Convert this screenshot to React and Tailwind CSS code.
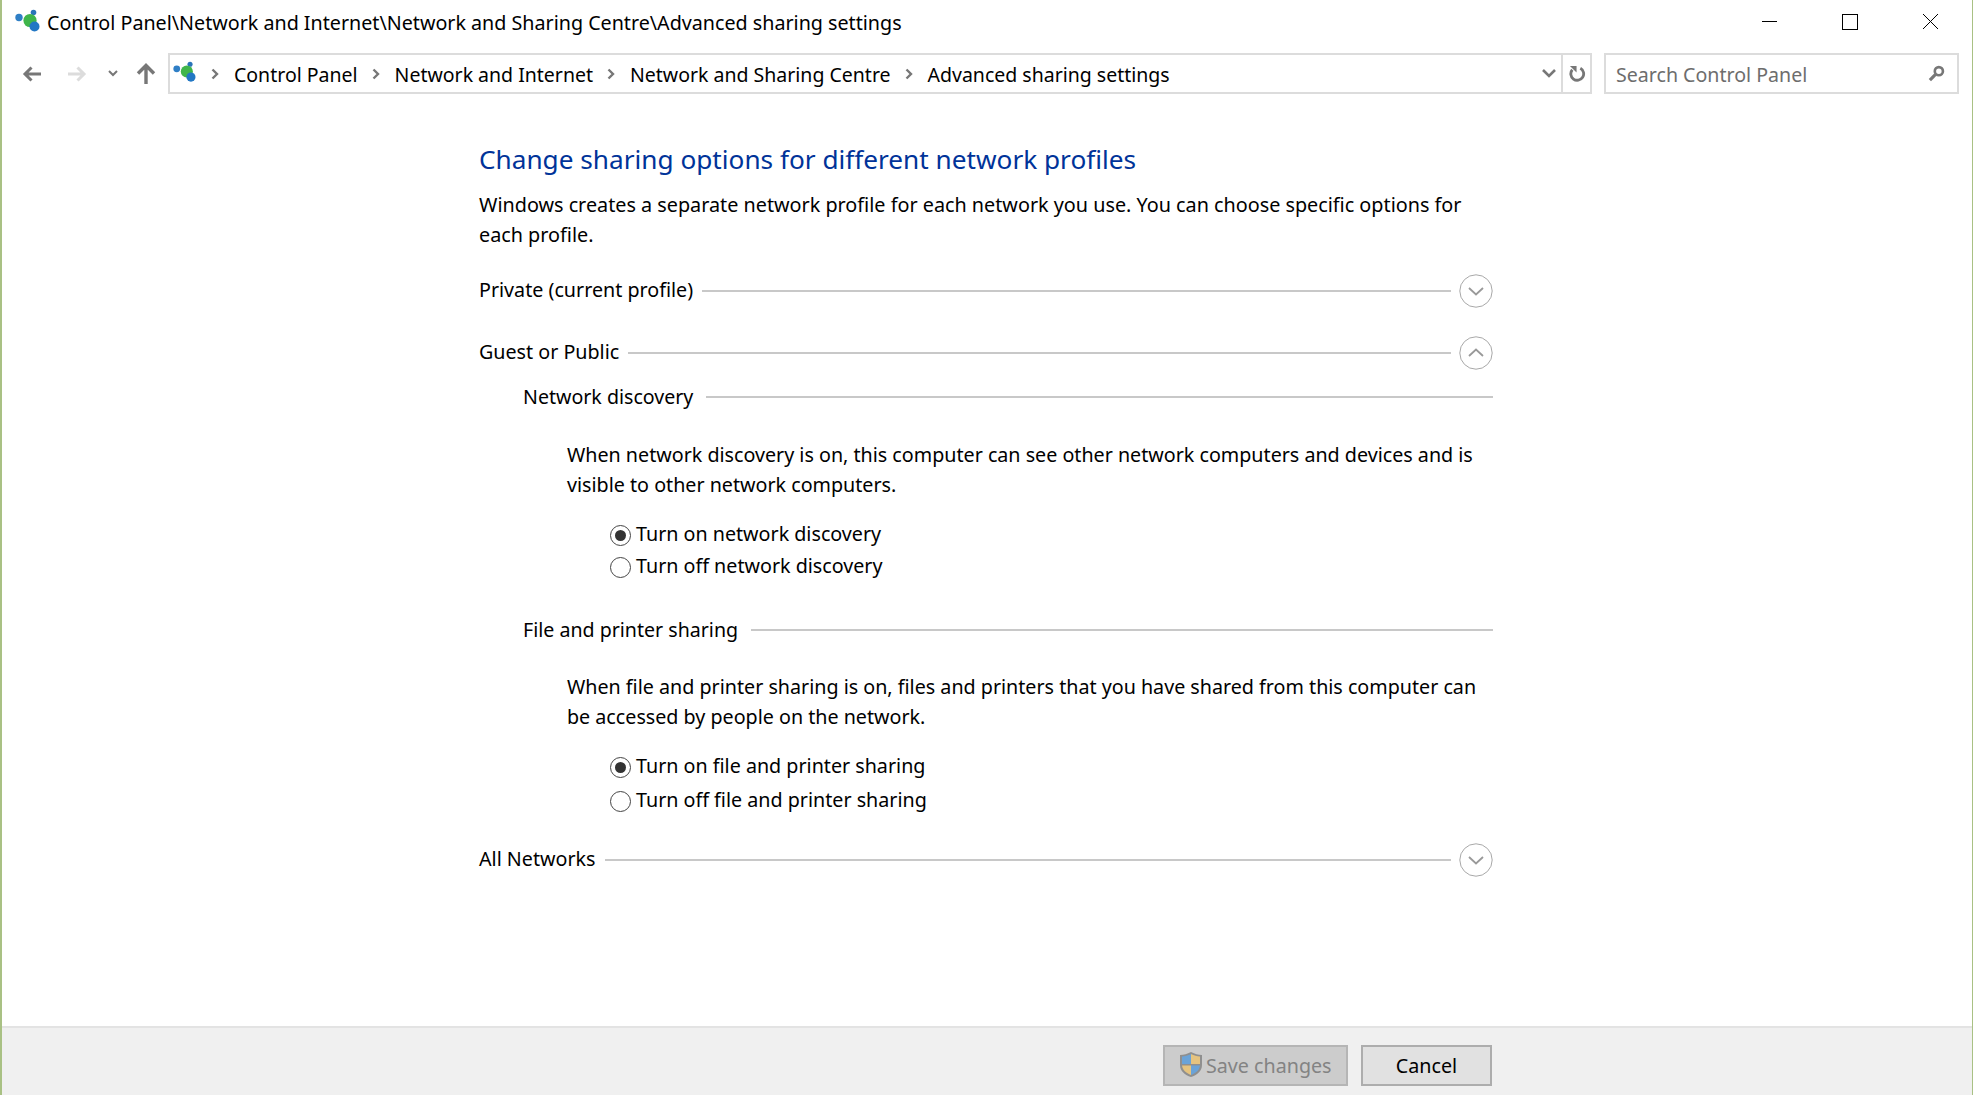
const NetworkIcon = ({ className }) => (
  <svg viewBox="0 0 26 24" className={className}>
    <circle cx="4" cy="8.5" r="3.7" fill="#2f7fc6" />
    <circle cx="18.5" cy="3.5" r="2.8" fill="#2a74b8" />
    <circle cx="15" cy="11.5" r="6.6" fill="#3fb54a" />
    <circle cx="19.5" cy="17.5" r="5" fill="#2277c4" />
  </svg>
);

const Chevron = ({ up }) => (
  <svg viewBox="0 0 34 34" className="w-[34px] h-[34px] shrink-0 mt-[1px]">
    <circle cx="17" cy="17" r="16.2" fill="none" stroke="#a8a8a8" strokeWidth="1" />
    <path d={up ? "M10 20 L17 13.5 L24 20" : "M10 14 L17 20.5 L24 14"} fill="none" stroke="#999" strokeWidth="1.8" />
  </svg>
);

const SectionRow = ({ label, up, className }) => (
  <div className={"flex items-center h-[34px] " + className}>
    <span className="text-[19.7px] text-black whitespace-nowrap">{label}</span>
    <div className="flex-1 h-[2px] bg-[#c8c8c8] ml-[9px] mr-[8px] mt-[1px]"></div>
    <Chevron up={up} />
  </div>
);

const SubRow = ({ label, className }) => (
  <div className={"flex items-center h-[30px] ml-[44px] " + className}>
    <span className="text-[19.6px] text-black whitespace-nowrap">{label}</span>
    <div className="flex-1 h-[2px] bg-[#c8c8c8] ml-[13px]"></div>
  </div>
);

const Radio = ({ label, checked, className }) => (
  <label className={"flex items-center h-[30px] ml-[131px] " + className}>
    <span className="w-[21px] h-[21px] rounded-full border border-[#444] flex items-center justify-center mr-[5px] mt-[2px] shrink-0">
      {checked && <span className="w-[11px] h-[11px] rounded-full bg-[#333]"></span>}
    </span>
    <span className="text-[19.7px] text-black whitespace-nowrap">{label}</span>
  </label>
);

const Crumb = ({ label }) => (
  <>
    <svg viewBox="0 0 8 12" className="w-[8px] h-[12px] ml-[14px] mr-[15px] shrink-0">
      <path d="M1.5 1.5 L6 6 L1.5 10.5" fill="none" stroke="#777" strokeWidth="2.4" />
    </svg>
    <span className="text-[19.5px] text-black whitespace-nowrap mt-[2px]">{label}</span>
  </>
);

export default function App() {
  return (
    <div className="w-[1973px] h-[1095px] overflow-hidden bg-white flex flex-col border-l-2 border-r border-[#a9c184]">
      <div className="font-['Noto_Sans',sans-serif] flex flex-col h-full">
        {/* title bar */}
        <div className="flex items-center h-[46px] pl-[13px] shrink-0">
          <NetworkIcon className="w-[26px] h-[24px] mr-[6px] mb-[4px]" />
          <span className="text-[19.7px] text-black">
            Control Panel\Network and Internet\Network and Sharing Centre\Advanced sharing settings
          </span>
          <div className="ml-auto flex items-center mb-[3px]">
            <div className="w-[80px] flex justify-center">
              <div className="w-[15px] h-px bg-black"></div>
            </div>
            <div className="w-[81px] flex justify-center">
              <div className="w-[16px] h-[16px] border border-black"></div>
            </div>
            <div className="w-[81px] flex justify-center mr-[1px]">
              <svg viewBox="0 0 15 15" className="w-[15px] h-[15px]">
                <path d="M0 0 L15 15 M15 0 L0 15" stroke="#000" strokeWidth="1" />
              </svg>
            </div>
          </div>
        </div>

        {/* nav bar */}
        <div className="flex items-center h-[41px] mt-[7px] shrink-0">
          <div className="w-[166px] flex items-center shrink-0">
            <svg viewBox="0 0 20 18" className="w-[20px] h-[18px] ml-[20px]">
              <path d="M19 9 H3 M9.5 2.5 L3 9 L9.5 15.5" fill="none" stroke="#777" strokeWidth="3" />
            </svg>
            <svg viewBox="0 0 20 18" className="w-[20px] h-[18px] ml-[25px]">
              <path d="M1 9 H17 M10.5 2.5 L17 9 L10.5 15.5" fill="none" stroke="#dcdcdc" strokeWidth="3" />
            </svg>
            <svg viewBox="0 0 10 7" className="w-[10px] h-[7px] ml-[21px]">
              <path d="M1 1 L5 5 L9 1" fill="none" stroke="#777" strokeWidth="2" />
            </svg>
            <svg viewBox="0 0 20 22" className="w-[20px] h-[22px] ml-[18px]">
              <path d="M10 21 V3 M2 10.5 L10 2.5 L18 10.5" fill="none" stroke="#777" strokeWidth="3.4" />
            </svg>
          </div>
          <div className="w-[1424px] h-[41px] border-2 border-[#dcdcdc] flex items-center shrink-0">
            <NetworkIcon className="w-[24px] h-[22px] ml-[3px] mb-[4px]" />
            <Crumb label="Control Panel" />
            <Crumb label="Network and Internet" />
            <Crumb label="Network and Sharing Centre" />
            <Crumb label="Advanced sharing settings" />
            <div className="ml-auto flex items-center h-full">
              <svg viewBox="0 0 14 9" className="w-[14px] h-[9px] mr-[5px]">
                <path d="M1 1 L7 7 L13 1" fill="none" stroke="#777" strokeWidth="2.6" />
              </svg>
              <div className="w-[29px] h-full border-l-2 border-[#dcdcdc] flex items-center justify-center pl-[2px]">
                <svg viewBox="0 0 18 18" className="w-[17px] h-[17px]">
                  <path d="M3.5 5 A6.8 6.8 0 1 0 12 3.4" fill="none" stroke="#777" strokeWidth="3" />
                  <path d="M1 1 H8 V8 Z" fill="#777" />
                </svg>
              </div>
            </div>
          </div>
          <div className="w-[355px] h-[41px] ml-[12px] border-2 border-[#dcdcdc] flex items-center pl-[10px] pr-[12px] shrink-0">
            <span className="text-[19.6px] text-[#6d6d6d] mt-[2px]">Search Control Panel</span>
            <svg viewBox="0 0 18 18" className="w-[17px] h-[17px] ml-auto">
              <circle cx="11.5" cy="6.5" r="4.3" fill="none" stroke="#777" strokeWidth="2.8" />
              <path d="M8 10 L2 16" stroke="#777" strokeWidth="3.4" />
            </svg>
          </div>
        </div>

        {/* content */}
        <div className="flex-1 pl-[477px]">
          <div className="w-[1014px]">
            <h1 className="text-[26.2px] leading-[38px] text-[#003399] mt-[46px]">
              Change sharing options for different network profiles
            </h1>
            <p className="text-[19.8px] leading-[30px] text-black mt-[12px]">
              Windows creates a separate network profile for each network you use. You can choose specific options for
              each profile.
            </p>
            <SectionRow label="Private (current profile)" className="mt-[23px]" />
            <SectionRow label="Guest or Public" up className="mt-[28px]" />
            <SubRow label="Network discovery" className="mt-[13px]" />
            <p className="text-[19.7px] leading-[30px] text-black ml-[88px] mt-[28px]">
              When network discovery is on, this computer can see other network computers and devices and is visible to
              other network computers.
            </p>
            <Radio label="Turn on network discovery" checked className="mt-[19px]" />
            <Radio label="Turn off network discovery" className="mt-[2px]" />
            <SubRow label="File and printer sharing" className="mt-[34px]" />
            <p className="text-[19.7px] leading-[30px] text-black ml-[88px] mt-[27px]">
              When file and printer sharing is on, files and printers that you have shared from this computer can be
              accessed by people on the network.
            </p>
            <Radio label="Turn on file and printer sharing" checked className="mt-[19px]" />
            <Radio label="Turn off file and printer sharing" className="mt-[4px]" />
            <SectionRow label="All Networks" className="mt-[27px]" />
          </div>
        </div>

        {/* footer */}
        <div className="h-[69px] bg-[#f0f0f0] border-t-2 border-[#e3e3e3] flex items-start justify-start pl-[1161px] pt-[17px] shrink-0">
          <div className="w-[185px] h-[41px] bg-[#cccccc] border-2 border-[#b5b5b5] flex items-center pl-[14px] shrink-0">
            <svg viewBox="0 0 24 27" className="w-[24px] h-[27px] shrink-0 mb-[2px] mr-[3px]">
              <path d="M12 1 C8 3 5 4 1 4 V14 C1 20 6 24 12 26 C18 24 23 20 23 14 V4 C19 4 16 3 12 1 Z" fill="#8f8f8f" />
              <path d="M12 3 C9 4.5 6 5.5 3 5.5 V13 H12 Z" fill="#6aa3d8" />
              <path d="M12 3 C15 4.5 18 5.5 21 5.5 V13 H12 Z" fill="#e5c37f" />
              <path d="M3 14.5 H12 V24 C7 22 3.5 19 3 14.5 Z" fill="#e5c37f" />
              <path d="M21 14.5 H12 V24 C17 22 20.5 19 21 14.5 Z" fill="#6aa3d8" />
            </svg>
            <span className="text-[19.7px] text-[#838383] whitespace-nowrap">Save changes</span>
          </div>
          <div className="w-[131px] h-[41px] ml-[13px] bg-[#e1e1e1] border-2 border-[#adadad] flex items-center justify-center shrink-0">
            <span className="text-[19.7px] text-black">Cancel</span>
          </div>
        </div>
      </div>
    </div>
  );
}
